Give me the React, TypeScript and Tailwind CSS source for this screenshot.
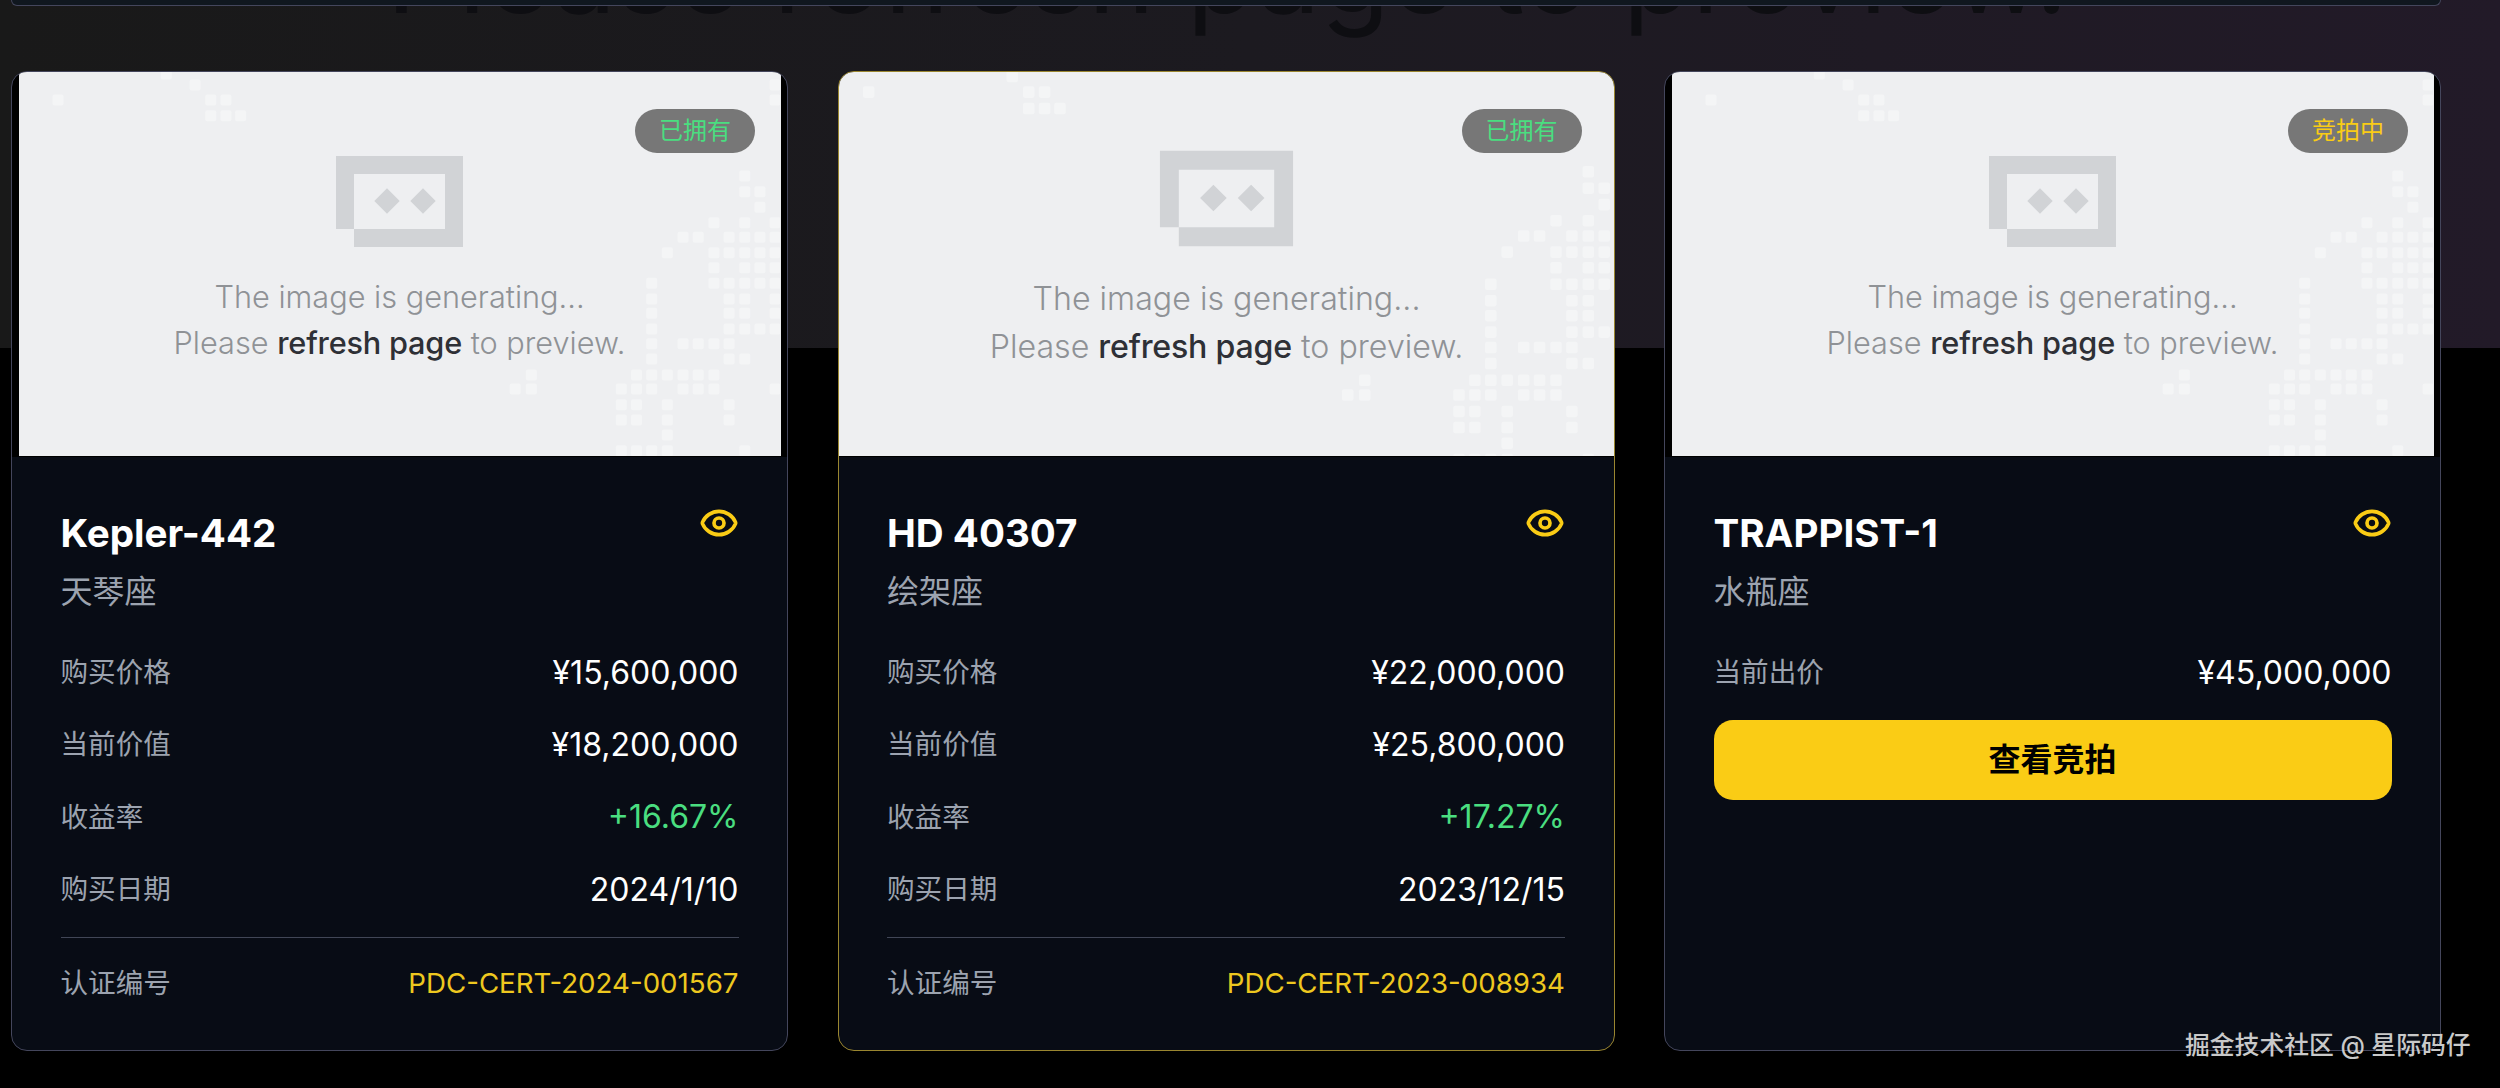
import { Eye } from "lucide-react";

const dotRows: [number, number[]][] = [
  [222, [318]],
  [255, [373, 1482]],
  [300, [111, 403, 432, 1482]],
  [347, [403, 432, 460]],
  [528, [1424]],
  [575, [1424, 1453]],
  [622, [1453]],
  [668, [1365, 1424, 1482]],
  [712, [1306, 1335, 1394, 1424, 1453, 1482]],
  [758, [1276, 1365, 1394, 1424, 1453, 1482]],
  [803, [1365, 1424, 1453, 1482]],
  [850, [1246, 1365, 1394, 1424, 1453, 1482]],
  [897, [1246, 1394, 1424, 1482]],
  [940, [1246, 1394, 1424, 1482]],
  [987, [1246, 1394, 1424, 1453, 1482]],
  [1031, [1246, 1306, 1335, 1365, 1394]],
  [1077, [1246, 1394, 1424]],
  [1125, [1016, 1217, 1246, 1276, 1306, 1335, 1365]],
  [1167, [985, 1016, 1188, 1217, 1246, 1306, 1335, 1365, 1482]],
  [1214, [1188, 1217, 1276, 1394]],
  [1260, [1188, 1217, 1276, 1394]],
  [1305, [1276]],
  [1352, [1188, 1217, 1246, 1276, 1424]],
];

function Placeholder({ zoomed }: { zoomed?: boolean }) {
  return (
    <div className={`flex h-[384px] justify-center overflow-hidden ${zoomed ? "rounded-t-[14px] bg-[#eeeff1]" : "mx-[6.5px] rounded-t-[4px] bg-[#eeeff1]"}`}>
      <div className={`relative h-[384px] w-[761px] shrink-0 pt-[202px] text-center text-[30.7px] leading-[46px] font-light text-[#8f9296] ${zoomed ? "scale-[1.048]" : ""}`}>
        <svg className="absolute inset-0" width="761" height="384" viewBox="0 0 761 384">
          {dotRows.flatMap(([y, xs]) =>
            xs.map((x) => (
              <rect key={`${x}-${y}`} x={x / 1.912 - 19 - 5.5} y={y / 3 - 72 - 5.5} width="11" height="11" rx="2" fill="#f4f5f6" />
            ))
          )}
          <path d="M317 84H444V175H335V157H317Z M335 102V157H426V102Z" fill="#d1d3d6" fillRule="evenodd" />
          <path d="M368 116.3L380.7 129L368 141.7L355.3 129Z M404 116.3L416.7 129L404 141.7L391.3 129Z" fill="#d1d3d6" />
        </svg>
        <div className="relative">The image is generating...</div>
        <div className="relative">
          Please <span className="font-medium tracking-[-0.2px] text-[#2e3036]">refresh page</span> to preview.
        </div>
      </div>
    </div>
  );
}

function Row({ label, value, valueClass }: { label: string; value: string; valueClass?: string }) {
  return (
    <div className="flex h-[40px] items-center justify-between">
      <span className="text-[27.6px] text-[#9ca3af]">{label}</span>
      <span className={`text-[32px] ${valueClass ?? "text-white"}`}>{value}</span>
    </div>
  );
}

type CardProps = {
  name: string;
  constellation: string;
  badge: string;
  badgeClass: string;
  gold?: boolean;
  children: React.ReactNode;
};

function Card({ name, constellation, badge, badgeClass, gold, children }: CardProps) {
  return (
    <div
      className={`relative h-[980px] overflow-hidden rounded-[16px] border-[1.5px] bg-[linear-gradient(#000_0,#000_385px,#080c15_385px)] ${
        gold ? "border-[#9a8630]" : "border-[#44465c]"
      }`}
    >
      <Placeholder zoomed={gold} />
      <span
        className={`absolute top-[37px] right-[32px] flex h-[44px] w-[120px] items-center justify-center rounded-full bg-[#777777] text-[24px] ${badgeClass}`}
      >
        {badge}
      </span>
      <div className="px-[48.5px] pt-[53px]">
        <div className="flex h-[48px] items-center justify-between">
          <h3 className="text-[38.6px] leading-[48px] font-bold text-white">{name}</h3>
          <Eye size={40} strokeWidth={2.2} className="-mt-[20px] text-[#facc15]" />
        </div>
        <div className="mt-[15px] h-[40px] text-[32px] leading-[40px] text-[#9ca3af]">{constellation}</div>
        <div className="mt-[40.5px]">{children}</div>
      </div>
    </div>
  );
}

function OwnedBody({ price, value, rate, date, cert }: { price: string; value: string; rate: string; date: string; cert: string }) {
  return (
    <div>
      <div className="flex flex-col gap-[32.4px]">
        <Row label="购买价格" value={price} />
        <Row label="当前价值" value={value} />
        <Row label="收益率" value={rate} valueClass="text-[#4ade80]" />
        <Row label="购买日期" value={date} />
      </div>
      <div className="mt-[27.5px] border-t-[1.5px] border-[#414656] pt-[25.5px]">
        <div className="flex h-[40px] items-center justify-between">
          <span className="text-[27.6px] text-[#9ca3af]">认证编号</span>
          <span className="text-[27.7px] text-[#eec81f]">{cert}</span>
        </div>
      </div>
    </div>
  );
}

export default function App() {
  return (
    <div className="relative h-[1088px] w-full overflow-hidden bg-black bg-[linear-gradient(to_right,#191919,#1c1a20_50%,#221a28)] bg-[length:100%_348px] bg-no-repeat [font-family:Inter,'Noto_Sans_CJK_SC',sans-serif]">
      <div className="absolute top-[-95px] left-0 w-full pr-[46px] text-center text-[113px] leading-[135px] whitespace-nowrap text-[#0e0e12]">
        Please refresh page to preview.
      </div>
      <div className="relative mr-[59px] ml-[11px] h-[6px] rounded-b-[12px] border-x-[1.5px] border-b-[1.5px] border-[#44465c] bg-[#10171f]" />
      <div className="relative mt-[65px] mr-[59px] ml-[11px] grid grid-cols-3 gap-[49.5px]">
        <Card name="Kepler-442" constellation="天琴座" badge="已拥有" badgeClass="text-[#4ade80]">
          <OwnedBody price="¥15,600,000" value="¥18,200,000" rate="+16.67%" date="2024/1/10" cert="PDC-CERT-2024-001567" />
        </Card>
        <Card name="HD 40307" constellation="绘架座" badge="已拥有" badgeClass="text-[#4ade80]" gold>
          <OwnedBody price="¥22,000,000" value="¥25,800,000" rate="+17.27%" date="2023/12/15" cert="PDC-CERT-2023-008934" />
        </Card>
        <Card name="TRAPPIST-1" constellation="水瓶座" badge="竞拍中" badgeClass="text-[#facc15]">
          <Row label="当前出价" value="¥45,000,000" />
          <button className="mt-[27.5px] flex h-[80px] w-full items-center justify-center rounded-[19px] bg-[#facc15] text-[32px] font-bold text-black">
            查看竞拍
          </button>
        </Card>
      </div>
      <div className="absolute top-[1027px] left-[2185px] text-[24.8px] leading-[36px] font-medium whitespace-nowrap text-[#c9c9c9]">
        掘金技术社区 @ 星际码仔
      </div>
    </div>
  );
}
